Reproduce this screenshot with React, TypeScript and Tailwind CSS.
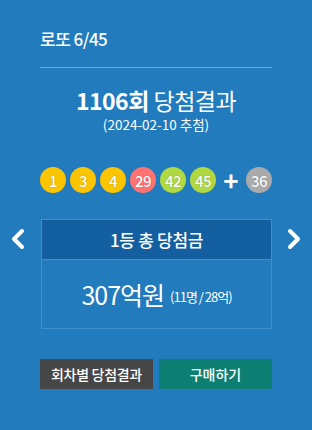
const balls = [
  { n: 1, color: 'bg-[#fbc400]' },
  { n: 3, color: 'bg-[#fbc400]' },
  { n: 4, color: 'bg-[#fbc400]' },
  { n: 29, color: 'bg-[#ff7272]' },
  { n: 42, color: 'bg-[#b0d840]' },
  { n: 45, color: 'bg-[#b0d840]' },
]

function Ball({ n, color }: { n: number; color: string }) {
  return (
    <div
      className={`w-[26px] h-[26px] rounded-full flex items-center justify-center text-white text-[15px] font-medium leading-none tracking-[-0.5px] ${color}`}
      style={{ textShadow: '0 0 1px rgba(0,0,0,0.4)' }}
    >
      {n}
    </div>
  )
}

function Chevron({ dir }: { dir: 'left' | 'right' }) {
  return (
    <svg width="15" height="22" viewBox="0 0 15 22" fill="none">
      <path
        d={dir === 'left' ? 'M12 3 L4 11 L12 19' : 'M3 3 L11 11 L3 19'}
        stroke="white"
        strokeWidth="4"
        strokeLinecap="round"
        strokeLinejoin="round"
      />
    </svg>
  )
}

export default function App() {
  return (
    <div
      className="w-[312px] h-[430px] bg-[#217bbd] text-white flex flex-col"
      style={{ fontFamily: '"Noto Sans CJK KR", "Noto Sans", sans-serif' }}
    >
      <div className="px-10 pt-[28px]">
        <div className="text-[17px] font-medium leading-[22px] tracking-[-0.5px]">로또 6/45</div>
        <div className="mt-[17px] h-px bg-[#6aa8d8]" />
      </div>

      <div className="mt-[18px] flex flex-col items-center">
        <div className="text-[23px] leading-[28px] tracking-[-0.5px]">
          <strong className="font-bold">1106회</strong> 당첨결과
        </div>
        <div className="text-[13.5px] leading-[18px] mt-[1px]">(2024-02-10 추첨)</div>
      </div>

      <div className="mt-[34px] px-10 flex items-center">
        <div className="flex gap-1">
          {balls.map((b) => (
            <Ball key={b.n} n={b.n} color={b.color} />
          ))}
        </div>
        <div className="w-[30px] flex justify-center text-[26px] font-bold leading-none">+</div>
        <Ball n={36} color="bg-[#aaaaaa]" />
      </div>

      <div className="mt-[26px] flex items-start">
        <div className="w-[41px] pl-[10px] pt-[9px]">
          <Chevron dir="left" />
        </div>
        <div className="w-[231px] border border-[#3f8fcb]">
          <div className="h-[40px] bg-[#135f9f] border-b border-[#3f8fcb] flex items-center justify-center text-[17px] font-medium tracking-[-0.3px]">
            1등 총 당첨금
          </div>
          <div className="h-[68px] flex items-center justify-center">
            <span className="text-[25px] leading-none tracking-[-1px]">307억원</span>
            <span className="ml-[6px] text-[13px] leading-none tracking-[-1px] mt-[4px]">(11명 / 28억)</span>
          </div>
        </div>
        <div className="flex-1 pl-[15px] pt-[9px]">
          <Chevron dir="right" />
        </div>
      </div>

      <div className="mt-[30px] px-10 flex gap-[6px]">
        <div className="w-[113px] h-[30px] bg-[#464646] flex items-center justify-center text-[14px] font-medium tracking-[-0.3px]">
          회차별 당첨결과
        </div>
        <div className="w-[113px] h-[30px] bg-[#0d7f72] flex items-center justify-center text-[14px] font-medium">
          구매하기
        </div>
      </div>
    </div>
  )
}
